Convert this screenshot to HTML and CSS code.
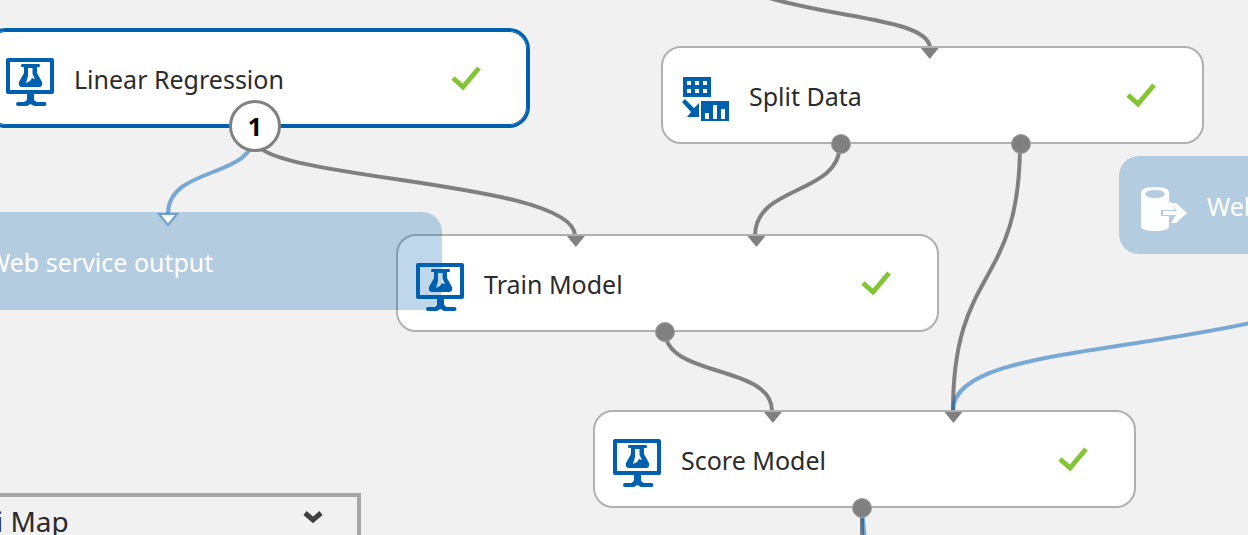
FILE: index.html
```html
<!DOCTYPE html>
<html lang="en">
<head>
<meta charset="utf-8">
<title>Experiment canvas</title>
<link rel="stylesheet" href="styles.css">
</head>
<body>
<svg class="defs" aria-hidden="true">
  <symbol id="model" viewBox="0 0 48 48">
    <path d="M2 2H46V34H2Z" fill="none" stroke="currentColor" stroke-width="4" stroke-linejoin="round"/>
    <path d="M21 35h7v6q0 2 3 3h7.500q2 0 2 2t-2 2H28l-3.500-2-3.500 2H12q-2 0-2-2t2-2h6q3-1 3-3Z" fill="currentColor"/>
    <path d="M16 6h17q1 0 1 1.500t-1 1.500h-2v6l5 9q1 4-2 5H15q-3-1-2-5l5-9V9h-2q-1 0-1-1.500T16 6Z" fill="currentColor"/>
    <path d="M22 10h4.500v6l2.500 5-3-1-2 3-4 2 2-7Z" fill="#fff"/>
  </symbol>
  <symbol id="split" viewBox="0 0 48 48">
    <path fill="currentColor" fill-rule="evenodd" d="M2 2h28v20H2ZM6 6v4h4V6ZM14 6v4h4V6ZM22 6v4h4V6ZM6 14v4h4v-4ZM14 14v4h4v-4ZM22 14v4h4v-4Z"/>
    <path fill="currentColor" fill-rule="evenodd" d="M20 26h28v20H20ZM24 38v6h4v-6ZM32 30v14h4V30ZM40 34v10h4V34Z"/>
    <path fill="currentColor" d="M1 27l3-3 9 9 5-5v14H6l4-5Z"/>
  </symbol>
  <symbol id="store" viewBox="0 0 48 48">
    <path fill="currentColor" fill-rule="evenodd" d="M2 8Q2 2 16 2T30 8V17H32L36 25H22V31H30V41Q30 46 16 46T2 41ZM6 9Q7 13 16 13T26 9Q25 5 16 5T6 9Z"/>
    <path fill="currentColor" d="M24 26h14l-6-8h5l11 10-11 10h-5l5-8H24Z"/>
  </symbol>
  <symbol id="check" viewBox="0 0 30 26">
    <path d="M2 13 12 22 28 3" fill="none" stroke="currentColor" stroke-width="5"/>
  </symbol>
</svg>

<main class="canvas">
  <svg class="wires" aria-hidden="true">
    <path class="wire" d="M766 -3C838 19 926 19 930 47"/>
    <path class="wire" d="M255 140C255 180 575 180 575 236"/>
    <path class="wire" d="M840 144C840 196 755 184 755 236"/>
    <path class="wire" d="M1020 144C1020 290 953 265 953 411"/>
    <path class="wire" d="M665 331C665 378 772 364 772 411"/>
    <path class="wire" d="M862 507V540"/>
    <path class="wire data" d="M255 132C255 180 168 165 168 214"/>
    <path class="wire data" d="M1250 323C1100 355 953 355 953 411"/>
    <path class="wire data" d="M862 507Q863 522 865 540"/>
  </svg>

  <article class="node linear selected">
    <svg class="icon"><use href="#model"/></svg>
    <h2 class="name">Linear Regression</h2>
    <svg class="status" role="img" aria-label="Done"><use href="#check"/></svg>
    <span class="badge">1</span>
  </article>
  <article class="node splitter">
    <svg class="icon"><use href="#split"/></svg>
    <h2 class="name">Split Data</h2>
    <svg class="status" role="img" aria-label="Done"><use href="#check"/></svg>
    <i class="in middle"></i><i class="out first"></i><i class="out second"></i>
  </article>
  <article class="node train">
    <svg class="icon"><use href="#model"/></svg>
    <h2 class="name">Train Model</h2>
    <svg class="status" role="img" aria-label="Done"><use href="#check"/></svg>
    <i class="in first"></i><i class="in second"></i><i class="out middle"></i>
  </article>
  <article class="node score">
    <svg class="icon"><use href="#model"/></svg>
    <h2 class="name">Score Model</h2>
    <svg class="status" role="img" aria-label="Done"><use href="#check"/></svg>
    <i class="in first"></i><i class="in second"></i><i class="out middle"></i>
  </article>
  <article class="node service output">
    <svg class="icon"><use href="#store"/></svg>
    <h2 class="name">Web service output</h2>
    <svg class="hollow middle" viewBox="0 0 22 14"><path d="M2 1H20L11 12Z"/></svg>
  </article>
  <article class="node service input">
    <svg class="icon"><use href="#store"/></svg>
    <h2 class="name">Web service input</h2>
  </article>

  <section class="minimap">
    <h2 class="name">Mini Map</h2>
    <button class="toggle" type="button" aria-label="Expand mini map">
      <svg class="chevron" viewBox="0 0 20 14"><path d="M2 3 10 10 18 3"/></svg>
    </button>
  </section>
</main>
</body>
</html>
```
FILE: styles.css
```css
* { box-sizing: border-box; }

body {
  margin: 0;
  background: #f1f1f1;
  color: #2b2b2b;
  font-family: "Noto Sans", "Open Sans", sans-serif;
}

.defs { position: absolute; width: 0; height: 0; }

.canvas {
  position: relative;
  height: 100vh;
  overflow: hidden;
}

.wires {
  position: absolute;
  inset: 0;
  width: 100%;
  height: 100%;
}
.wire { fill: none; stroke: #808080; stroke-width: 4; }
.wire.data { stroke: rgba(0, 98, 184, 0.5); }

.node {
  position: absolute;
  display: flex;
  align-items: center;
  gap: 20px;
  width: 543px;
  height: 98px;
  padding: 2px 46px 0 18px;
  border: 2px solid #b0b0b0;
  border-radius: 20px;
  background: #fff;
}
.selected {
  border-color: #0060b0;
  box-shadow: 0 0 0 1px #0060b0, inset 0 0 0 1px #0060b0;
}

.linear { left: -14px; top: 29px; }
.splitter { left: 661px; top: 46px; }
.train { left: 396px; top: 234px; }
.score { left: 593px; top: 410px; }
.output { left: -101px; top: 212px; }
.input { left: 1119px; top: 156px; }

.service {
  border-color: transparent;
  background: rgba(0, 96, 176, 0.25) border-box;
  color: #fff;
}

.icon { flex: none; width: 48px; height: 48px; margin-top: 6px; color: #0060b0; }
.service .icon { color: #fff; }

.name {
  margin: 0;
  font-size: 25px;
  line-height: 36px;
  font-weight: 400;
  white-space: nowrap;
}

.status { flex: none; width: 30px; height: 26px; margin: 0 0 2px auto; color: #84c536; }

.first { left: 33%; }
.middle { left: 49.5%; }
.second { left: 66.5%; }

.in {
  position: absolute;
  top: 0;
  width: 18px;
  height: 11px;
  background: #808080;
  clip-path: polygon(0 0, 100% 0, 50% 100%);
  transform: translateX(-50%);
}
.out {
  position: absolute;
  top: 102%;
  width: 20px;
  height: 20px;
  border: 1px solid #a0a0a0;
  border-radius: 50%;
  background: #808080;
  transform: translate(-50%, -50%);
}
.hollow {
  position: absolute;
  top: -1px;
  width: 22px;
  height: 14px;
  fill: #fff;
  stroke: #6f9fc6;
  stroke-width: 2;
  transform: translateX(-50%);
}
.badge {
  position: absolute;
  left: 49.5%;
  top: 101%;
  display: grid;
  place-items: center;
  width: 52px;
  height: 52px;
  border: 3px solid #808080;
  border-radius: 50%;
  background: #fff;
  color: #000;
  font-size: 25px;
  font-weight: 700;
  transform: translate(-50%, -50%);
}

.minimap {
  position: absolute;
  left: -80px;
  top: 493px;
  display: flex;
  align-items: flex-start;
  justify-content: space-between;
  width: 441px;
  height: 240px;
  padding: 6px 34px 0 22px;
  border: 4px solid #a6a6a6;
  background: #f1f1f1;
}
.minimap .name { font-size: 28px; }
.toggle { padding: 7px 0; border: 0; background: none; }
.chevron {
  display: block;
  width: 20px;
  height: 14px;
  fill: none;
  stroke: #404040;
  stroke-width: 5;
}
```
